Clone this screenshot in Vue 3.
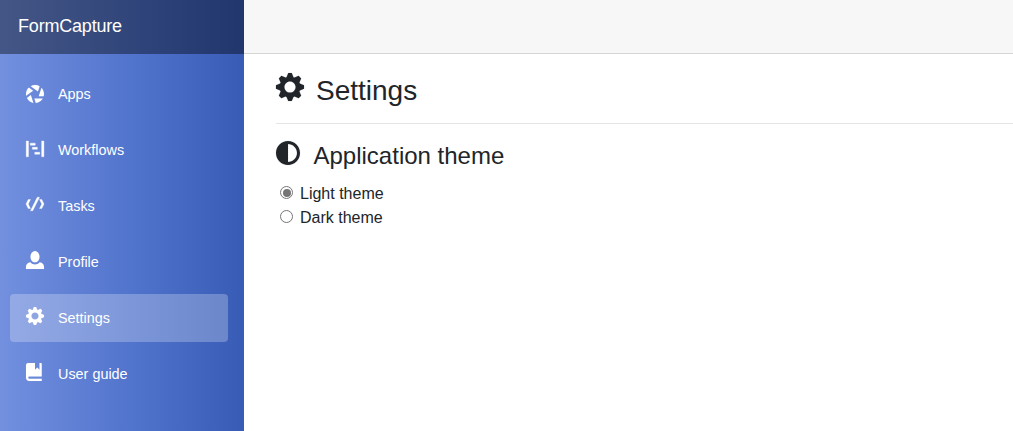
<script setup>
import { ref } from 'vue'

const theme = ref('light')
const cog = 'M3.5 0l-.5 1.19c-.1.03-.19.08-.28.13l-1.19-.5-.72.72.5 1.19c-.05.1-.09.18-.13.28l-1.19.5v1l1.19.5c.04.1.08.18.13.28l-.5 1.19.72.72 1.19-.5c.09.04.18.09.28.13l.5 1.19h1l.5-1.19c.09-.04.19-.08.28-.13l1.19.5.72-.72-.5-1.19c.04-.09.09-.19.13-.28l1.19-.5v-1l-1.19-.5c-.03-.09-.08-.19-.13-.28l.5-1.19-.72-.72-1.19.5c-.09-.04-.19-.09-.28-.13l-.5-1.19h-1zm.5 2.4c.88 0 1.6.72 1.6 1.6s-.72 1.6-1.6 1.6-1.6-.72-1.6-1.6.72-1.6 1.6-1.6z'
const items = [
  { label: 'Apps', low: true, icon: 'M4 0c-.69 0-1.34.19-1.91.5l3.22 2.34.75-2.25c-.6-.36-1.31-.59-2.06-.59zm-2.75 1.13c-.76.73-1.25 1.74-1.25 2.88 0 .25.02.48.06.72l3.09-2.22-1.91-1.38zm5.63.13l-1.22 3.75h2.19c.08-.32.13-.65.13-1 0-1.07-.44-2.03-1.13-2.75h.03zm-4.72 3.22l-1.75 1.25c.55 1.13 1.6 1.99 2.88 2.22l-1.13-3.47zm1.56 1.53l.63 1.97c1.33-.12 2.46-.88 3.09-1.97h-3.72z' },
  { label: 'Workflows', low: true, bold: true, icon: 'M.1 0v7h1v-7zM6.95 0v7h1v-7zM1.9 .95v.9h2.2v-.9zM2.85 2.8v.9h2.2v-.9zM3.9 5v.9h2.2v-.9z' },
  { label: 'Tasks', bold: true, icon: 'M5 1l-3 6h1l3-6h-1zm-4 1l-1 2 1 2h1l-1-2 1-2h-1zm5 0l1 2-1 2h1l1-2-1-2h-1z' },
  { label: 'Profile', icon: 'M4 0c-1.1 0-2 1.12-2 2.5s.9 2.5 2 2.5 2-1.12 2-2.5-.9-2.5-2-2.5zm-2.09 5c-1.06.05-1.91.92-1.91 2v1h8v-1c0-1.08-.84-1.95-1.91-2-.54.61-1.28 1-2.09 1-.81 0-1.55-.39-2.09-1z' },
  { label: 'Settings', active: true, icon: cog },
  { label: 'User guide', icon: 'M1 0c-.07 0-.13.01-.19.03-.39.08-.7.39-.78.78-.03.06-.03.12-.03.19v5.5c0 .83.67 1.5 1.5 1.5h5.5v-1h-5.5c-.28 0-.5-.22-.5-.5s.22-.5.5-.5h5.5v-5.5c0-.28-.22-.5-.5-.5h-.5v3l-1-1-1 1v-3h-3z' }
]
</script>

<template>
  <div class="page">
    <aside class="sidebar">
      <div class="brand">FormCapture</div>
      <nav>
        <a v-for="item in items" :key="item.label" class="item" :class="{ active: item.active }">
          <svg class="icon" :class="{ low: item.low, bold: item.bold }" viewBox="0 0 8 8"><path :d="item.icon" /></svg>
          <span>{{ item.label }}</span>
        </a>
      </nav>
    </aside>
    <div class="main">
      <header class="topbar"></header>
      <main class="content">
        <h1><svg viewBox="0 0 8 8"><path :d="cog" /></svg><span>Settings</span></h1>
        <hr>
        <h2><svg viewBox="0 0 8 8"><path d="M4 0c-2.2 0-4 1.8-4 4s1.8 4 4 4 4-1.8 4-4-1.8-4-4-4zm0 1c1.66 0 3 1.34 3 3s-1.34 3-3 3v-6z" /></svg><span>Application theme</span></h2>
        <label><input v-model="theme" type="radio" name="theme" value="light"><span>Light theme</span></label>
        <label><input v-model="theme" type="radio" name="theme" value="dark"><span>Dark theme</span></label>
      </main>
    </div>
  </div>
</template>

<style>
body { margin: 0; overflow: hidden; }
</style>
<style scoped>
* { box-sizing: border-box; }
.page {
  display: flex;
  height: 100vh;
  background: #fff;
  color: #212529;
  font: 16px/24px "Liberation Sans", Arial, sans-serif;
}
svg {
  flex: none;
  overflow: visible;
  fill: currentColor;
  stroke: currentColor;
  stroke-width: .03;
}
.sidebar {
  width: 244px;
  flex: none;
  color: #fff;
  background: linear-gradient(90deg, #7390df 0%, #4f72cb 57%, #385bb6 100%);
}
.brand {
  height: 54px;
  padding: 14px 18px;
  font-size: 18px;
  letter-spacing: -.19px;
  background: rgba(0, 0, 0, .4);
}
nav {
  display: flex;
  flex-direction: column;
  gap: 8px;
  padding: 16px 16px 0 10px;
}
.item {
  display: flex;
  height: 48px;
  padding-left: 16px;
  border-radius: 4px;
  font-size: 14.4px;
  line-height: 48px;
}
.active { background: rgba(255, 255, 255, .25); }
.icon { width: 18px; height: 18px; margin: 13px 14px 0 0; }
.low { margin-top: 15px; }
.bold { stroke-width: .16; }
.main { flex: 1; min-width: 0; }
.topbar { height: 54px; background: #f7f7f7; border-bottom: 1px solid #d6d5d5; }
.content { padding-left: 32px; }
h1, h2 { display: flex; margin: 0; font-weight: 400; }
h1 { height: 69px; padding-top: 19px; font-size: 28px; line-height: 36px; }
h1 svg { width: 28px; height: 28px; margin-right: 12px; }
hr { height: 1px; margin: 0; border: 0; background: rgba(0, 0, 0, .1); }
h2 { height: 58px; padding-top: 17px; font-size: 24px; line-height: 29px; }
h2 svg { width: 24px; height: 24px; margin-right: 13.5px; }
label { display: flex; height: 24px; }
input {
  display: grid;
  place-items: center;
  width: 13px;
  height: 13px;
  margin: 4px 7px 0 4px;
  border: 1px solid #767676;
  border-radius: 50%;
  appearance: none;
}
input:checked::before {
  content: "";
  width: 8px;
  height: 8px;
  margin: -.5px;
  border-radius: 50%;
  background: #757575;
}
</style>
